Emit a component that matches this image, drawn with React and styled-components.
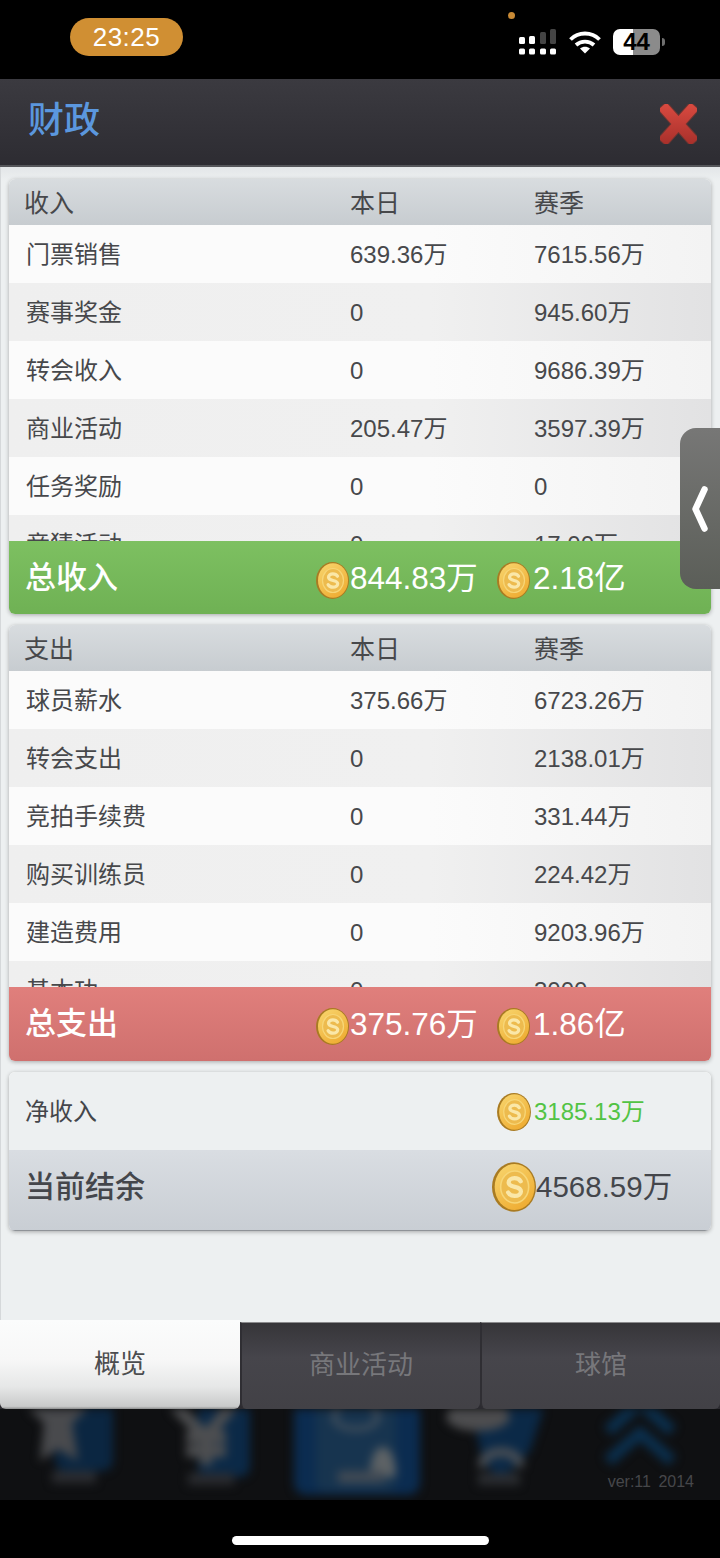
import React, { useId } from 'react'
import styled, { createGlobalStyle } from 'styled-components'

const GlobalStyle = createGlobalStyle`
  html, body {
    margin: 0;
    padding: 0;
    background: #000;
  }
  * {
    box-sizing: border-box;
  }
`

const FONT = `"Liberation Sans", "Noto Sans CJK SC", sans-serif`

const Screen = styled.div`
  position: relative;
  width: 720px;
  height: 1558px;
  overflow: hidden;
  display: flex;
  flex-direction: column;
  background: #000;
  font-family: ${FONT};
`

const StatusBar = styled.div`
  position: relative;
  height: 79px;
  flex: none;
  display: flex;
  align-items: flex-start;
  padding: 18px 60px 0 70px;
  background: #000;
`

const TimePill = styled.div`
  width: 113px;
  height: 38px;
  border-radius: 19px;
  background: #d08f33;
  color: #fff;
  font-size: 26px;
  line-height: 38px;
  text-align: center;
  letter-spacing: 0.5px;
`

const CameraDot = styled.span`
  position: absolute;
  left: 508px;
  top: 12px;
  width: 7px;
  height: 7px;
  border-radius: 50%;
  background: #c98a35;
`

const StatusIcons = styled.div`
  margin-left: auto;
  display: flex;
  align-items: center;
  gap: 12px;
  margin-top: 11px;
`

const Battery = styled.div`
  position: relative;
  width: 47px;
  height: 26px;
  border-radius: 7px;
  background: linear-gradient(90deg, #fff 0, #fff 43%, #8b8b8b 43%, #8b8b8b 100%);
  color: #000;
  font-size: 24px;
  font-weight: 700;
  line-height: 26px;
  text-align: center;

  &::after {
    content: '';
    position: absolute;
    right: -5px;
    top: 9px;
    width: 3px;
    height: 8px;
    border-radius: 0 3px 3px 0;
    background: #6f6f6f;
  }
`

const Header = styled.header`
  height: 88px;
  flex: none;
  display: flex;
  align-items: center;
  justify-content: space-between;
  padding: 0 23px 2px 28px;
  background: linear-gradient(#3b3a40, #2d2c32);
  border-bottom: 2px solid #55565a;
`

const Title = styled.h1`
  margin: 0;
  color: #5b97de;
  font-size: 36px;
  font-weight: 500;
  line-height: 44px;
`

const CloseIcon = styled.svg`
  width: 37px;
  height: 40px;
  margin-top: 6px;
`

const Content = styled.main`
  height: 1155px;
  flex: none;
  display: flex;
  flex-direction: column;
  gap: 11px;
  padding: 12px 9px 0;
  background: linear-gradient(#e3e6e8, #edf0f1 14px);
  box-shadow: inset 1px 0 0 #d5d8da;
`

const Panel = styled.section`
  display: flex;
  flex-direction: column;
  border-radius: 6px;
  overflow: hidden;
  box-shadow: 0 1px 4px rgba(0, 0, 0, 0.3);
  background: #fff;
`

const PanelHead = styled.div`
  height: 46px;
  flex: none;
  display: grid;
  grid-template-columns: 326px 184px 1fr;
  align-items: center;
  padding: 2px 0 0 15px;
  background: linear-gradient(#d8dcdf, #c7ccd0);
  color: #47484b;
  font-size: 25px;
  line-height: 30px;
`

const RowList = styled.div`
  height: ${(p) => p.$height}px;
  overflow: hidden;
`

const Row = styled.div`
  height: 58px;
  display: grid;
  grid-template-columns: 324px 184px 1fr;
  align-items: center;
  padding: 2px 0 0 17px;
  color: #47484b;
  font-size: 24px;
  line-height: 30px;
  background: linear-gradient(90deg, ${(p) => (p.$odd ? '#fbfbfb, #fbfbfb 60%, #f3f3f3' : '#efefef, #f0f0f0 60%, #e2e2e3')});
`

const TotalBar = styled.div`
  height: ${(p) => p.$height}px;
  flex: none;
  display: grid;
  grid-template-columns: 291px 181px 1fr;
  align-items: center;
  padding-left: 16px;
  color: #fff;
  background: ${(p) => (p.$tone === 'green'
    ? 'linear-gradient(#7dc061, #6fb154)'
    : 'linear-gradient(#e07f7c, #cf706e)')};
`

const TotalLabel = styled.div`
  font-size: 31px;
  font-weight: 500;
  line-height: 40px;
`

const Money = styled.div`
  display: flex;
  align-items: center;
  gap: ${(p) => p.$gap ?? 1}px;
  font-size: ${(p) => p.$size}px;
  line-height: 40px;
  color: ${(p) => p.$color || 'inherit'};
  white-space: nowrap;
`

const CoinIcon = styled.svg`
  flex: none;
  width: ${(p) => p.$w}px;
  height: ${(p) => p.$h}px;
  margin-top: ${(p) => p.$drop ?? 0}px;
`

const SummaryRow = styled.div`
  height: ${(p) => p.$height}px;
  display: grid;
  grid-template-columns: ${(p) => p.$columns};
  align-items: center;
  padding: ${(p) => (p.$strong ? '0 0 6px 16px' : '2px 0 0 16px')};
  color: #44464b;
  background: ${(p) => (p.$strong ? 'linear-gradient(#d9dde2, #c9ced4)' : '#edf0f1')};
  border-bottom: ${(p) => (p.$strong ? '1px solid #8f9398' : 'none')};
`

const SummaryLabel = styled.div`
  font-size: ${(p) => (p.$strong ? 30 : 24)}px;
  font-weight: ${(p) => (p.$strong ? 500 : 400)};
  line-height: 40px;
`

const SideHandle = styled.div`
  position: absolute;
  right: 0;
  top: 428px;
  width: 40px;
  height: 161px;
  display: flex;
  align-items: center;
  justify-content: center;
  border-radius: 16px 0 0 16px;
  background: linear-gradient(#777776, #5b5e58);
`

const Tabs = styled.nav`
  position: relative;
  height: 87px;
  flex: none;
  display: grid;
  grid-template-columns: repeat(3, 1fr);
  background: #2c2b30;
`

const Tab = styled.div`
  display: flex;
  align-items: center;
  justify-content: center;
  padding-bottom: 2px;
  font-size: 26px;
  line-height: 34px;
  border-radius: 0 0 6px 6px;
  ${(p) => (p.$active
    ? `
    margin-top: -2px;
    color: #4c4d4f;
    background: linear-gradient(#fbfcfc 0, #f7f7f7 45%, #e6e7e7 75%, #c9caca 97%, #8d8e8e 100%);
  `
    : `
    color: #77777b;
    background: linear-gradient(#363539, #46454b 40%, #424146);
    border-left: 2px solid #2f2e33;
    border-top: 1px solid #8a8a8c;
  `)}
`

const BlurredDock = styled.div`
  position: relative;
  height: 91px;
  flex: none;
  overflow: hidden;
  background: #0f1012;
`

const DockArt = styled.svg`
  display: block;
  width: 720px;
  height: 91px;
  filter: blur(5px);
`

const Version = styled.span`
  position: absolute;
  right: 26px;
  bottom: 9px;
  color: #46474a;
  font-size: 16px;
  line-height: 18px;
  word-spacing: 3px;
`

const HomeBar = styled.div`
  flex: 1;
  display: flex;
  justify-content: center;
  padding-top: 36px;
  background: #000;

  &::before {
    content: '';
    width: 257px;
    height: 9px;
    border-radius: 5px;
    background: #fff;
  }
`

const income = [
  ['门票销售', '639.36万', '7615.56万'],
  ['赛事奖金', '0', '945.60万'],
  ['转会收入', '0', '9686.39万'],
  ['商业活动', '205.47万', '3597.39万'],
  ['任务奖励', '0', '0'],
  ['竞猜活动', '0', '17.00万']
]

const expense = [
  ['球员薪水', '375.66万', '6723.26万'],
  ['转会支出', '0', '2138.01万'],
  ['竞拍手续费', '0', '331.44万'],
  ['购买训练员', '0', '224.42万'],
  ['建造费用', '0', '9203.96万'],
  ['基本功', '0', '3000']
]

const Coin = ({ w = 33, h = 37, drop }) => {
  const id = useId()
  return (
    <CoinIcon $w={w} $h={h} $drop={drop} viewBox="0 0 33 37">
      <defs>
        <linearGradient id={id} x1="0" y1="0" x2="0.6" y2="1">
          <stop offset="0" stopColor="#f8d66f" />
          <stop offset="1" stopColor="#efae35" />
        </linearGradient>
      </defs>
      <ellipse cx="16.5" cy="18.5" rx="16.5" ry="18.5" fill="#a97b22" />
      <ellipse cx="17" cy="18.500" rx="15" ry="17.300" fill={`url(#${id})`} />
      <ellipse cx="17" cy="18.500" rx="10.500" ry="12" fill="#edbb4e" stroke="#f7d677" strokeWidth="1.200" />
      <path
        d="M21.500 14.200c-1-1.600-2.600-2.300-4.600-2.300-2.500 0-4.400 1.300-4.400 3.300 0 4.300 9.200 2.200 9.200 6.600 0 2-2 3.400-4.700 3.400-2.200 0-3.900-.9-4.900-2.600"
        fill="none"
        stroke="#fae7a8"
        strokeWidth="3.200"
        strokeLinecap="round"
      />
    </CoinIcon>
  )
}

const Close = () => (
  <CloseIcon viewBox="0 0 37 40">
    <defs>
      <linearGradient id="closeFill" gradientUnits="userSpaceOnUse" x1="0" y1="0" x2="0" y2="40">
        <stop offset="0" stopColor="#d94a40" />
        <stop offset="1" stopColor="#a8302b" />
      </linearGradient>
    </defs>
    <path d="M6 6 L31 34 M31 6 L6 34" stroke="#6f3531" strokeWidth="12.500" strokeLinecap="square" />
    <path d="M6 6 L31 34 M31 6 L6 34" stroke="url(#closeFill)" strokeWidth="10.500" strokeLinecap="square" />
  </CloseIcon>
)

const Signal = () => (
  <svg width="38" height="26" viewBox="0 0 38 26">
    <g fill="#fff">
      <rect x="0" y="8" width="6" height="7" rx="1.5" />
      <rect x="10" y="7" width="6" height="8" rx="1.5" />
      <rect x="0" y="19.500" width="6" height="6" rx="1.500" />
      <rect x="10" y="19.500" width="6" height="6" rx="1.500" />
      <rect x="21" y="19.500" width="6" height="6" rx="1.500" />
      <rect x="31" y="19.500" width="6" height="6" rx="1.500" />
    </g>
    <rect x="21" y="3" width="6" height="12" rx="1.5" fill="#444" />
    <rect x="31" y="0" width="6" height="15" rx="1.5" fill="#444" />
  </svg>
)

const Wifi = () => (
  <svg width="32" height="23" viewBox="0 0 32 23" fill="none" stroke="#fff" strokeWidth="3.800">
    <path d="M1.500 8.500 C9.500 .5 22.500 .5 30.500 8.500" />
    <path d="M7 14 C12 9.500 20 9.500 25 14" />
    <path d="M16 22.500 L11 17.500 C14 15 18 15 21 17.500 Z" fill="#fff" stroke="none" />
  </svg>
)

const Chevron = () => (
  <svg width="16" height="46" viewBox="0 0 16 46" fill="none">
    <path d="M12.500 3.500 L3.500 23 L12.500 42.500" stroke="#fff" strokeWidth="6.500" strokeLinecap="round" strokeLinejoin="round" />
  </svg>
)

const DockPicture = () => (
  <DockArt viewBox="0 0 720 91">
    <rect x="55" y="-10" width="58" height="72" rx="10" fill="#0b2641" />
    <polygon points="58,-14 66,-2 90,-2 72,14 78,52 58,40 40,52 44,14 26,-2 50,-2" fill="#494a4d" />
    <rect x="52" y="62" width="44" height="12" fill="#2b2c30" />
    <rect x="198" y="-10" width="52" height="78" rx="10" fill="#0b2947" />
    <path d="M172 -6 L206 28 L234 -6 M206 28 L206 56 M186 28 L226 28 M186 42 L226 42" stroke="#4d4e50" strokeWidth="12" fill="none" />
    <rect x="188" y="64" width="46" height="12" fill="#2a2b2f" />
    <rect x="294" y="-14" width="126" height="100" rx="12" fill="#0b2c50" />
    <rect x="316" y="-14" width="80" height="96" rx="8" fill="#17344f" />
    <ellipse cx="356" cy="8" rx="22" ry="12" fill="none" stroke="#505860" strokeWidth="4" />
    <path d="M370 68 C370 48 376 38 382 38 C390 38 396 48 396 68 Z" fill="#5d6265" />
    <rect x="338" y="62" width="46" height="12" fill="#414a54" />
    <path d="M470 -8 L546 -8 L530 42 L500 72 L482 50 Z" fill="#0b2947" />
    <ellipse cx="478" cy="8" rx="32" ry="14" fill="#4d4d4f" />
    <path d="M482 58 C482 38 520 38 520 58" stroke="#4c5055" strokeWidth="9" fill="none" />
    <rect x="478" y="64" width="42" height="12" fill="#2b2d31" />
    <path d="M608 22 L640 -6 L672 22" stroke="#0b2f4d" strokeWidth="12" fill="none" />
    <path d="M608 52 L640 24 L672 52" stroke="#0b2f4d" strokeWidth="12" fill="none" />
  </DockArt>
)

const TablePanel = ({ name, rows, listHeight, total, tone, totalHeight }) => (
  <Panel>
    <PanelHead>
      <span>{name}</span>
      <span>本日</span>
      <span>赛季</span>
    </PanelHead>
    <RowList $height={listHeight}>
      {rows.map((row, index) => (
        <Row key={row[0]} $odd={index % 2 === 0}>
          <span>{row[0]}</span>
          <span>{row[1]}</span>
          <span>{row[2]}</span>
        </Row>
      ))}
    </RowList>
    <TotalBar $tone={tone} $height={totalHeight}>
      <TotalLabel>{total.label}</TotalLabel>
      <Money $size={31.5} $gap={1}>
        <Coin drop={5} />
        {total.day}
      </Money>
      <Money $size={31.5} $gap={3}>
        <Coin drop={5} />
        {total.season}
      </Money>
    </TotalBar>
  </Panel>
)

const App = () => {
  return (
    <Screen>
      <GlobalStyle />
      <StatusBar>
        <TimePill>23:25</TimePill>
        <CameraDot />
        <StatusIcons>
          <Signal />
          <Wifi />
          <Battery>44</Battery>
        </StatusIcons>
      </StatusBar>
      <Header>
        <Title>财政</Title>
        <Close />
      </Header>
      <Content>
        <TablePanel
          name="收入"
          rows={income}
          listHeight={316}
          tone="green"
          totalHeight={73}
          total={{ label: '总收入', day: '844.83万', season: '2.18亿' }}
        />
        <TablePanel
          name="支出"
          rows={expense}
          listHeight={316}
          tone="red"
          totalHeight={74}
          total={{ label: '总支出', day: '375.76万', season: '1.86亿' }}
        />
        <Panel>
          <SummaryRow $height={78} $columns="472px 1fr">
            <SummaryLabel>净收入</SummaryLabel>
            <Money $size={24} $color="#52c344" $gap={3}>
              <Coin w={34} h={38} />
              3185.13万
            </Money>
          </SummaryRow>
          <SummaryRow $height={81} $strong $columns="467px 1fr">
            <SummaryLabel $strong>当前结余</SummaryLabel>
            <Money $size={29.5} $gap={-2}>
              <Coin w={44} h={50} />
              4568.59万
            </Money>
          </SummaryRow>
        </Panel>
      </Content>
      <Tabs>
        <Tab $active>概览</Tab>
        <Tab>商业活动</Tab>
        <Tab>球馆</Tab>
      </Tabs>
      <BlurredDock>
        <DockPicture />
        <Version>ver:11 2014</Version>
      </BlurredDock>
      <HomeBar />
      <SideHandle>
        <Chevron />
      </SideHandle>
    </Screen>
  )
}

export default App
